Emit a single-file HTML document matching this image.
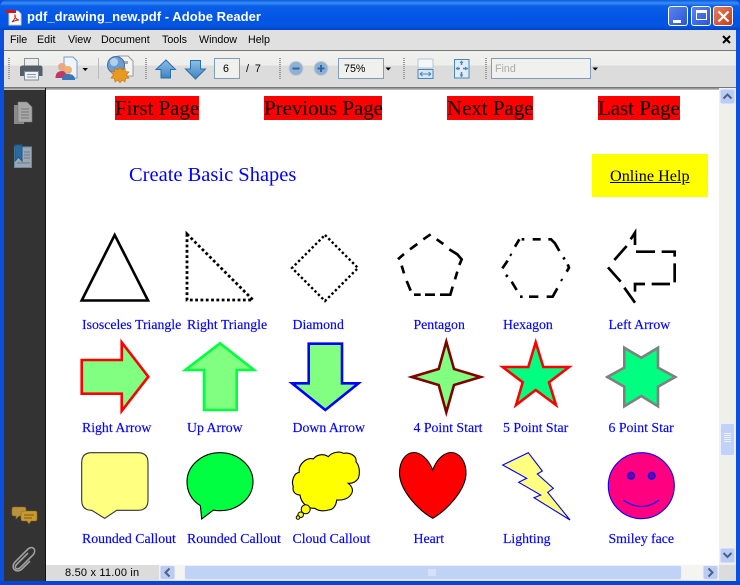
<!DOCTYPE html>
<html><head><meta charset="utf-8">
<style>
html,body{margin:0;padding:0;width:740px;height:585px;overflow:hidden;background:#fff}
.a{position:absolute;white-space:nowrap}
.ui{font-family:"Liberation Sans",sans-serif;font-size:10.700px;color:#000}
.s{font-family:"Liberation Serif",serif;color:#00f;font-size:13.800px;line-height:16px;-webkit-text-stroke:.15px #00f}
.h{font-family:"Liberation Serif",serif;color:#000;background:#f00;font-size:20.900px;line-height:24px;height:24px;top:96px}
.g{position:absolute;top:58px;width:2px;height:22px;background:repeating-linear-gradient(#999 0 1px,transparent 1px 2px)}
.b{position:absolute;background:#f0f0ee;border:1px solid #7f9db9;box-sizing:border-box}
</style></head><body>
<div class="a" style="left:0;top:0;width:740px;height:585px;background:#0a4fe0"></div>
<div class="a" style="left:0;top:0;width:740px;height:30px;background:linear-gradient(#0a5ae0 0,#3a8cf5 3px,#0a5fe8 6px,#0255e5 18px,#0455e0 26px,#0342c8 30px);border-radius:7px 7px 0 0"></div>
<div class="a" style="left:4px;top:30px;width:732px;height:551px;background:#fff"></div>
<div class="a" style="left:4px;top:30px;width:732px;height:20px;background:#e0e0e0"></div>
<div class="a" style="left:4px;top:50px;width:732px;height:1px;background:#777"></div>
<div class="a" style="left:4px;top:51px;width:732px;height:36px;background:linear-gradient(#f0f0ee 0,#eeeeec 14px,#dcdcdc 15px,#dcdcdc 36px)"></div>
<div class="a" style="left:4px;top:87px;width:732px;height:3px;background:linear-gradient(#666,#ccc)"></div>
<div class="a" style="left:4px;top:90px;width:41px;height:491px;background:#333"></div>
<div class="a" style="left:45px;top:88px;width:1px;height:493px;background:#111"></div>

<div class="a" style="left:27px;top:9px;font:bold 13px/16px 'Liberation Sans',sans-serif;color:#fff;letter-spacing:.05px">pdf_drawing_new.pdf - Adobe Reader</div>
<svg class="a" style="left:6px;top:8px" width="16" height="18"><path d="M3 3H12L15 6V17H3Z" fill="#fff" stroke="#ccc"/><rect x="0" y="2" width="10" height="3" fill="#e01010"/><path d="M6 14C9 11 10 9 9 7C8 9 11 12 13 12C10 12 8 13 6 14Z" fill="none" stroke="#d02020"/></svg>
<div class="a" style="left:668px;top:6px;width:20px;height:20px;box-sizing:border-box;border:1px solid #fff;border-radius:3px;background:linear-gradient(135deg,#5a83ee,#2a55d8)"><div class="a" style="left:4px;top:13px;width:8px;height:3px;background:#fff"></div></div>
<div class="a" style="left:691px;top:6px;width:20px;height:20px;box-sizing:border-box;border:1px solid #fff;border-radius:3px;background:linear-gradient(135deg,#5a83ee,#2a55d8)"><div class="a" style="left:4px;top:3px;width:11px;height:10px;box-sizing:border-box;border:1px solid #fff;border-top-width:3px"></div></div>
<div class="a" style="left:713px;top:6px;width:20px;height:20px;box-sizing:border-box;border:1px solid #fff;border-radius:3px;background:linear-gradient(135deg,#e8805e,#c83a18)"><svg class="a" style="left:3px;top:3px" width="13" height="13"><path d="M1.500 1.500L11.500 11.500M11.500 1.500L1.500 11.500" stroke="#fff" stroke-width="2.200"/></svg></div>

<div class="a ui" style="left:10px;top:33px;line-height:14px">File</div>
<div class="a ui" style="left:37px;top:33px;line-height:14px">Edit</div>
<div class="a ui" style="left:68px;top:33px;line-height:14px">View</div>
<div class="a ui" style="left:101px;top:33px;line-height:14px">Document</div>
<div class="a ui" style="left:162px;top:33px;line-height:14px">Tools</div>
<div class="a ui" style="left:199px;top:33px;line-height:14px">Window</div>
<div class="a ui" style="left:248px;top:33px;line-height:14px">Help</div>
<svg class="a" style="left:722px;top:35px" width="9" height="9"><path d="M1 1L8 8M8 1L1 8" stroke="#000" stroke-width="2"/></svg>

<div class="g" style="left:8px"></div><div class="g" style="left:145px"></div><div class="g" style="left:279px"></div><div class="g" style="left:403px"></div><div class="g" style="left:485px"></div>
<div class="a" style="left:98px;top:58px;width:1px;height:21px;background:#bbb"></div>

<svg class="a" style="left:0;top:50px" width="740" height="38">
<defs><linearGradient id="ar" x1="0" y1="0" x2="0" y2="1"><stop offset="0" stop-color="#8cbfe8"/><stop offset="1" stop-color="#3d84c0"/></linearGradient></defs>
<!-- printer -->
<rect x="24.500" y="8.500" width="14" height="8" fill="#eceef0" stroke="#8a929a"/>
<path d="M20 18Q20 15.500 23 15.500H40Q42.500 15.500 42.500 18V26H20Z" fill="#555e66"/>
<rect x="24.500" y="21.500" width="14" height="8.500" fill="#f0f2f4" stroke="#7a8a9a"/>
<path d="M27 24.500H36M27 27H36" stroke="#8a9aaa"/>
<!-- share -->
<path d="M64 7H73L77 11V28H64Z" fill="#eef4fb" stroke="#7a9cc0"/>
<circle cx="62" cy="17" r="4" fill="#e8a888"/><path d="M55.500 28Q55.500 21 62 21Q67 21 67 28Z" fill="#c03868"/>
<circle cx="68" cy="20" r="4" fill="#f0b070"/><path d="M62 30Q62 24 68 24Q75 24 75 30Z" fill="#3878b8"/>
<path d="M82.500 18H88L85.200 21Z" fill="#000"/>
<!-- settings -->
<path d="M118 6H128L133 11V26H118Z" fill="#f4f4f4" stroke="#999"/>
<rect x="119" y="11" width="9" height="3" fill="#aaa"/>
<circle cx="116" cy="15" r="8.500" fill="#6c9cd0" stroke="#3d6ea8"/>
<circle cx="114" cy="12" r="4" fill="#b0d0ee"/>
<path d="M120 17L122 20L125 18L125.500 21.500L129 22L126.500 25L129 28L125.500 28.500L125 32L122 30L120 33L118 30L115 32L114.500 28.500L111 28L113.500 25L111 22L114.500 21.500L115 18L118 20Z" fill="#e89a20" stroke="#b87010" stroke-width=".6"/>
<!-- up/down -->
<path d="M166 10L175.500 19.500H170.500V28H161V19.500H156Z" fill="url(#ar)" stroke="#2c6ea8"/>
<path d="M195.500 29L205.500 19H200.500V10.500H190.500V19H185.500Z" fill="url(#ar)" stroke="#2c6ea8"/>
<!-- zoom -->
<circle cx="296" cy="18.500" r="7" fill="#8fb0d0" stroke="#c4ccd4"/><path d="M292.500 18.500H299.500" stroke="#2a68a8" stroke-width="2"/>
<circle cx="321" cy="18.500" r="7" fill="#8fb0d0" stroke="#c4ccd4"/><path d="M317.500 18.500H324.500M321 15V22" stroke="#2a68a8" stroke-width="2"/>
<!-- dropdowns -->
<path d="M385.500 17.500H391L388.200 20.500Z" fill="#000"/>
<path d="M592.500 17.500H598L595.200 20.500Z" fill="#000"/>
<!-- fit width -->
<rect x="418" y="9" width="15" height="9" rx="1" fill="#f4f6f8" stroke="#b8c4d0"/>
<rect x="418" y="19.500" width="15" height="9" fill="#d8e6f4" stroke="#4a86b8"/>
<path d="M420 24H431M420 24L422.500 22M420 24L422.500 26M431 24L428.500 22M431 24L428.500 26" stroke="#4a86b8" fill="none"/>
<!-- fit page -->
<rect x="454.500" y="9.500" width="14.500" height="18.500" fill="#e0ecf6" stroke="#4a86b8"/>
<path d="M461.500 11V15M461.500 22V27M456 18.500H460M463 18.500H468" stroke="#4a86b8" stroke-width="1.500"/>
<path d="M459.500 13L461.500 10.500L463.500 13ZM459.500 24.500L461.500 27L463.500 24.500ZM458.500 16.500L455.500 18.500L458.500 20.500ZM465 16.500L468 18.500L465 20.500Z" fill="#4a86b8"/>
</svg>

<div class="b" style="left:214px;top:58px;width:26px;height:21px"></div>
<div class="a ui" style="left:223px;top:62px;line-height:14px">6</div>
<div class="a ui" style="left:246px;top:62px;line-height:14px">/&nbsp; 7</div>
<div class="b" style="left:338px;top:58px;width:46px;height:21px"></div>
<div class="a ui" style="left:344px;top:62px;line-height:14px">75%</div>
<div class="b" style="left:491px;top:58px;width:100px;height:21px"></div>
<div class="a ui" style="left:495px;top:62px;line-height:14px;color:#aaa">Find</div>

<!-- sidebar icons -->
<svg class="a" style="left:4px;top:90px" width="41" height="491">
<path d="M10 15H20V34H10Z" fill="#8a8a8a"/><path d="M14 12H23L28 17V32H14Z" fill="#a8a8a8" stroke="#777" stroke-width=".6"/><path d="M17 19H25M17 22H25M17 25H25M17 28H25" stroke="#777"/>
<path d="M10.500 57H27.500V77.500H10.500Z" fill="#9aa8b4" stroke="#6a8ca8"/><path d="M11 55H18V71L14.500 67L11 71Z" fill="#2a6a9e" stroke="#1f5a88"/><path d="M20 62H26M20 65H26M20 68H26M13 73H26" stroke="#6c7c88"/>
<path d="M10 417H20Q22 417 22 419V424Q22 426 20 426H15L12 429V426H10Q8 426 8 424V419Q8 417 10 417Z" fill="#b8923c" stroke="#8a6a20" stroke-width=".6"/>
<path d="M19 421H31Q33 421 33 423V429Q33 431 31 431H27L25 434L23 431H19Q17 431 17 429V423Q17 421 19 421Z" fill="#c89a30" stroke="#8a6a20" stroke-width=".6"/><path d="M20 425H30M20 428H28" stroke="#7a5a18"/>
<path d="M24 463L13 474C9 478 13 481 17 477L29 465C33 460 29 455 24 459L11 472C6 478 12 484 18 479L26 471" fill="none" stroke="#a0a0a0" stroke-width="1.600"/>
</svg>

<!-- page content -->
<div class="a h" style="left:115px;width:84px">First Page</div>
<div class="a h" style="left:264px;width:118px">Previous Page</div>
<div class="a h" style="left:447px;width:86px">Next Page</div>
<div class="a h" style="left:598px;width:82px">Last Page</div>
<div class="a" style="left:129px;top:163px;font:20.500px/24px 'Liberation Serif',serif;color:#00f">Create Basic Shapes</div>
<div class="a" style="left:592px;top:154px;width:116px;height:43px;background:#ff0"></div>
<div class="a" style="left:610px;top:167px;font:16.200px/18px 'Liberation Serif',serif;color:#000;text-decoration:underline">Online Help</div>

<svg class="a" style="left:0;top:0" width="740" height="585">
<g fill="none" stroke="#000">
<path d="M114.700 235L81.700 300.500H148Z" stroke-width="2.600"/>
<path d="M187 234V300H253L187 234Z" stroke-width="2.800" stroke-dasharray="2.800 2.500"/>
<path d="M325 235L358 268L325 301L292 268Z" stroke-width="2.400" stroke-dasharray="2.400 2.400"/>
</g>
<g transform="translate(380 220) scale(.33333)" fill="none" stroke="#000" stroke-width="8">
<path d="M152 43L130 58M112 72L90 88M72 102L57 115L60 118M65 137L72 160M80 183L92 212M102 224H122M135 224H165M180 224H211L218 200M225 178L232 155M238 135L245 118L232 103L208 88M190 72L170 58"/>
<path d="M425 58H433M458 58H482M505 58H513L525 70L538 93M550 112L554 118M563 133L567 143L560 155M543 178L547 182M532 205L518 230H500M447 230H475M420 230H428M410 210L395 185M378 165L383 170M367 145L383 122M390 103L395 106M405 80L418 58"/>
<path d="M752 58L765 38V75M740 78L703 120M684 142L722 185M733 203L765 248M765 215V192H795M815 192H870M884 187V130M884 110V95H845M825 95H768"/>
</g>
<path d="M81.700 360H121.700V342.300L148.300 376.700L121.700 411V393.700H81.700Z" fill="#80ff80" stroke="#f00" stroke-width="2.600"/>
<path d="M220 343.300L254 370H236.700V410H204V370H185.300Z" fill="#80ff80" stroke="#00ff40" stroke-width="2.600"/>
<path d="M308.700 343.700H342V383.300H358.500L325.300 410L292 383.300H308.700Z" fill="#80ff80" stroke="#00f" stroke-width="2.600"/>
<path d="M446.300 341.700L454 369L480.700 377L454 385L446.300 412.300L438.700 385L411.700 377L438.700 369Z" fill="#80ff80" stroke="#800000" stroke-width="2.600"/>
<path d="M535.700 342.300L543.300 367H569L549 382.300L556 405L535.700 390L516 405L522.700 382.300L502.700 367H528.300Z" fill="#00ff80" stroke="#f00" stroke-width="2.600"/>
<path d="M624.300 347.700L641.300 357.700L658 347.700V367.700L675.300 377L658 386.700V406.300L641.300 396L624.300 406.300V386.700L607.300 377L624.300 367.700Z" fill="#00ff80" stroke="#808080" stroke-width="2.600"/>

<path d="M91.700 452.700H138Q148 452.700 148 462.700V500.300Q148 510.300 138 510.300H116.700L104.700 518.300L91.700 510.300Q81.700 510.300 81.700 500.300V462.700Q81.700 452.700 91.700 452.700Z" fill="#ffff80" stroke="#333" stroke-width="1.100"/>
<path d="M201.700 519L200.400 505.700C191 500 187 491 187 481.700C187 465.700 202 452.700 220 452.700C238 452.700 253 465.700 253 481.700C253 497.700 238 510.700 220 510.700C217.500 510.700 215 510.500 213.300 510.200Z" fill="#00ff40" stroke="#000" stroke-width="1.100"/>
<path d="M299.300 472.300C298 464 307 457 313.300 459C317 454 324 453.500 328.300 456.700C332 452 340 451 343.300 453.300C350 452 357 456 356 461.700C360 466 360 474 358.300 478.300C356 482 352 483.500 348.300 483.300C353 487 353 491 351.700 493.300C349 499 342 500.500 336.700 500C336 506 333 510 328.300 510C324 511.500 318 511 315 508.300C308 509 301 503 300 495C295 495 292 491 293.300 486.700C291 481 294 473 299.300 472.300Z" fill="#ff0" stroke="#000" stroke-width="1.100"/>
<circle cx="305.700" cy="509.300" r="4.500" fill="#ff0" stroke="#000"/>
<circle cx="300.700" cy="514.800" r="2.800" fill="#ff0" stroke="#000"/>
<circle cx="298" cy="517.500" r="1.800" fill="#ff0" stroke="#000"/>
<path d="M432.700 470C428 458 420 452.500 414 452.500C405 452.500 399.500 462 399.500 473C399.500 490 418 510 432.700 518.300C447 510 466 490 466 473C466 462 460 452.500 451 452.500C445 452.500 437 458 432.700 470Z" fill="#f00" stroke="#000" stroke-width="1.100"/>
<path d="M528.300 452.700L542.300 471L537.300 474L553.300 488.300L547.700 492.300L570 520L534 497.700L540.700 495L518.700 482.300L526.700 478.300L502.700 465Z" fill="#ffff80" stroke="#00f" stroke-width="1.100"/>
<circle cx="641.300" cy="485.700" r="33" fill="#ff0080" stroke="#00f" stroke-width="1.100"/>
<circle cx="631" cy="475.700" r="3.300" fill="#800080" stroke="#00f" stroke-width="1.500"/>
<circle cx="651.700" cy="475.700" r="3.300" fill="#800080" stroke="#00f" stroke-width="1.500"/>
<path d="M623.300 500Q641.300 513 659.300 500" fill="none" stroke="#00f" stroke-width="1.100"/>
</svg>

<div class="a s" style="left:82px;top:317px">Isosceles Triangle</div>
<div class="a s" style="left:187px;top:317px">Right Triangle</div>
<div class="a s" style="left:292.500px;top:317px">Diamond</div>
<div class="a s" style="left:413.500px;top:317px">Pentagon</div>
<div class="a s" style="left:503px;top:317px">Hexagon</div>
<div class="a s" style="left:608.500px;top:317px">Left Arrow</div>
<div class="a s" style="left:82px;top:420px">Right Arrow</div>
<div class="a s" style="left:187px;top:420px">Up Arrow</div>
<div class="a s" style="left:292.500px;top:420px">Down Arrow</div>
<div class="a s" style="left:413.500px;top:420px">4 Point Start</div>
<div class="a s" style="left:503px;top:420px">5 Point Star</div>
<div class="a s" style="left:608.500px;top:420px">6 Point Star</div>
<div class="a s" style="left:82px;top:531px">Rounded Callout</div>
<div class="a s" style="left:187px;top:531px">Rounded Callout</div>
<div class="a s" style="left:292.500px;top:531px">Cloud Callout</div>
<div class="a s" style="left:413.500px;top:531px">Heart</div>
<div class="a s" style="left:503px;top:531px">Lighting</div>
<div class="a s" style="left:608.500px;top:531px">Smiley face</div>

<!-- vertical scrollbar -->
<div class="a" style="left:719px;top:88px;width:17px;height:477px;background:#f0f0ea"></div>
<svg class="a" style="left:719px;top:88px" width="17" height="477">
<rect x="1" y="1" width="15" height="15" rx="2" fill="#b8ccf4" stroke="#eef"/><path d="M4.500 10.500L8.500 6.500L12.500 10.500" fill="none" stroke="#4d6185" stroke-width="2"/>
<rect x="1.500" y="335.500" width="14" height="32" rx="2" fill="#c0d2f6" stroke="#eef"/><path d="M5 345.500H12M5 347.500H12M5 349.500H12M5 351.500H12M5 353.500H12" stroke="#eef"/>
<rect x="1" y="460" width="15" height="15" rx="2" fill="#b8ccf4" stroke="#eef"/><path d="M4.500 465L8.500 469L12.500 465" fill="none" stroke="#4d6185" stroke-width="2"/>
</svg>
<!-- bottom status & scrollbar -->
<div class="a" style="left:46px;top:565px;width:690px;height:16px;background:#dcdcdc"></div>
<div class="a ui" style="left:65px;top:566px;line-height:15px;font-size:11px;letter-spacing:.2px">8.50 x 11.00 in</div>
<div class="a" style="left:159px;top:565px;width:560px;height:15px;background:#f4f4f0"></div>
<svg class="a" style="left:159px;top:565px" width="560" height="16">
<rect x="1" y="0.500" width="15" height="14" rx="2" fill="#b8ccf4" stroke="#eef"/><path d="M10.500 3.500L6.500 7.500L10.500 11.500" fill="none" stroke="#4d6185" stroke-width="2"/>
<rect x="25.500" y="0.500" width="497" height="14" rx="2" fill="#c0d2f6" stroke="#eef"/><path d="M270 4V11M272 4V11M274 4V11M276 4V11" stroke="#eef"/>
<rect x="544" y="0.500" width="15" height="14" rx="2" fill="#b8ccf4" stroke="#eef"/><path d="M549.500 3.500L553.500 7.500L549.500 11.500" fill="none" stroke="#4d6185" stroke-width="2"/>
</svg>
<div class="a" style="left:0;top:581px;width:740px;height:4px;background:#0a45d0"></div>
</body></html>
